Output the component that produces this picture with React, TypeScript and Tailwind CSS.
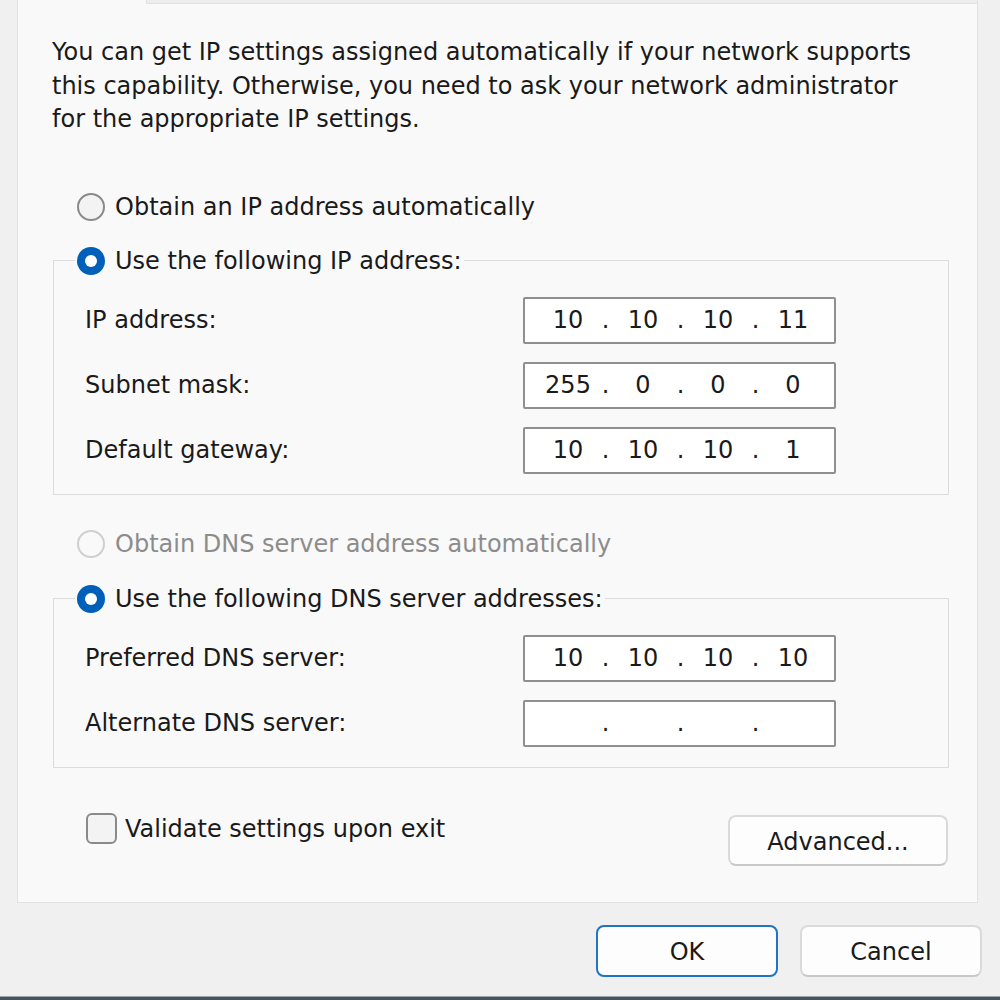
import React from "react";

const font = "font-['DejaVu_Sans',Tahoma,sans-serif]";

function Radio({ checked, disabled, label }: { checked?: boolean; disabled?: boolean; label: string }) {
  return (
    <div className="flex items-center h-[36px]">
      {checked ? (
        <span className="w-[28px] h-[28px] rounded-full bg-[#005fb8] flex items-center justify-center">
          <span className="w-[12px] h-[12px] rounded-full bg-white" />
        </span>
      ) : (
        <span
          className={
            disabled
              ? "w-[28px] h-[28px] rounded-full border-2 border-[#cfcfcf] bg-[#f9f9f9]"
              : "w-[28px] h-[28px] rounded-full border-2 border-[#8a8a8a] bg-[#f3f3f3]"
          }
        />
      )}
      <span className={disabled ? "ml-[10px] text-[#8c8c8c]" : "ml-[10px] text-[#1a1a1a]"}>{label}</span>
    </div>
  );
}

function IpBox({ parts }: { parts: string[] }) {
  return (
    <div className="w-[313px] h-[47px] border-2 border-[#8f8f8f] rounded-[2px] bg-white flex items-center pl-[12px]">
      {parts.map((p, i) => (
        <React.Fragment key={i}>
          <span className="w-[62px] text-center">{p}</span>
          {i < 3 && <span className="w-[13px] text-center">.</span>}
        </React.Fragment>
      ))}
    </div>
  );
}

function Row({ label, parts }: { label: string; parts: string[] }) {
  return (
    <div className="flex items-center">
      <span className="w-[438px]">{label}</span>
      <IpBox parts={parts} />
    </div>
  );
}

function Group({ legend, children }: { legend: React.ReactNode; children: React.ReactNode }) {
  return (
    <fieldset className="border border-[#dcdcdc] ml-[1px] mr-[-1px]">
      <legend className="ml-[21px] px-[2px]">{legend}</legend>
      <div className="pl-[31px] pt-[18px] pb-[20px] flex flex-col gap-[18px]">{children}</div>
    </fieldset>
  );
}

export default function App() {
  return (
    <div className={`w-[1000px] h-[1000px] bg-[#f0f0f0] flex flex-col text-[24px] text-[#1a1a1a] ${font}`}>
      <div className="ml-[17px] w-[961px] h-[903px] bg-[#f9f9f9] border-x border-b border-[#e2e2e2] flex flex-col">
        <div className="flex h-[4px]">
          <div className="w-[129px] border-r border-[#e2e2e2]" />
          <div className="flex-1 bg-[#ededed] border-b border-[#e2e2e2]" />
        </div>
        <div className="pl-[34px] pr-[29px] flex flex-col">
          <p className="mt-[32px] leading-[33.5px] whitespace-nowrap">
            You can get IP settings assigned automatically if your network supports
            <br />
            this capability. Otherwise, you need to ask your network administrator
            <br />
            for the appropriate IP settings.
          </p>
          <div className="mt-[52px] ml-[25px]">
            <Radio label="Obtain an IP address automatically" />
          </div>
          <div className="mt-[18px]">
            <Group legend={<Radio checked label="Use the following IP address:" />}>
              <Row label="IP address:" parts={["10", "10", "10", "11"]} />
              <Row label="Subnet mask:" parts={["255", "0", "0", "0"]} />
              <Row label="Default gateway:" parts={["10", "10", "10", "1"]} />
            </Group>
          </div>
          <div className="mt-[31px] ml-[25px]">
            <Radio disabled label="Obtain DNS server address automatically" />
          </div>
          <div className="mt-[19px]">
            <Group legend={<Radio checked label="Use the following DNS server addresses:" />}>
              <Row label="Preferred DNS server:" parts={["10", "10", "10", "10"]} />
              <Row label="Alternate DNS server:" parts={["", "", "", ""]} />
            </Group>
          </div>
          <div className="flex justify-between items-start">
            <div className="mt-[43px] ml-[34px] flex items-center h-[36px]">
              <span className="w-[31px] h-[31px] rounded-[6px] border-2 border-[#8a8a8a] bg-[#f3f3f3]" />
              <span className="ml-[8px]">Validate settings upon exit</span>
            </div>
            <button className="mt-[47px] w-[220px] h-[51px] pt-[4px] rounded-[8px] border-2 border-[#dadada] border-b-[#c8c8c8] bg-[#fdfdfd] flex items-center justify-center">
              Advanced...
            </button>
          </div>
        </div>
      </div>
      <div className="flex justify-end gap-[22px] mt-[22px] mr-[18px]">
        <button className="w-[182px] h-[52px] pt-[2px] rounded-[8px] border-2 border-[#1f74c6] bg-[#fdfdfd] flex items-center justify-center">
          OK
        </button>
        <button className="w-[182px] h-[52px] pt-[2px] rounded-[8px] border-2 border-[#dadada] border-b-[#c8c8c8] bg-[#fdfdfd] flex items-center justify-center">
          Cancel
        </button>
      </div>
      <div className="mt-auto h-[4px] border-t border-[#9aa6b0] bg-[#46535f]" />
    </div>
  );
}
